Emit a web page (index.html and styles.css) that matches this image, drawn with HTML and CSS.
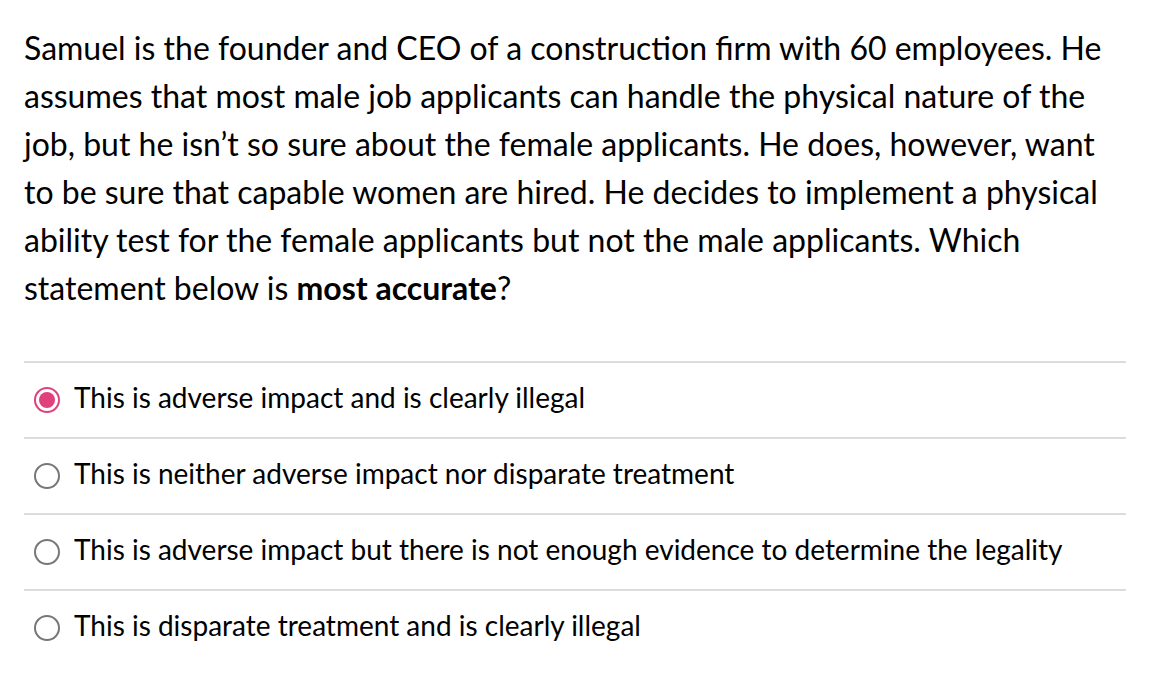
FILE: index.html
```html
<!DOCTYPE html>
<html lang="en">
<head>
<meta charset="utf-8">
<title>Question</title>
<link rel="stylesheet" href="styles.css">
</head>
<body>
<div class="question">
  <p class="prompt">Samuel is the founder and CEO of a construction firm with 60 employees. He assumes that most male job applicants can handle the physical nature of the job, but he isn’t so sure about the female applicants. He does, however, want to be sure that capable women are hired. He decides to implement a physical ability test for the female applicants but not the male applicants. Which statement below is <strong>most accurate</strong>?</p>
  <div class="answers">
    <label class="answer"><span class="radio checked"></span><span class="answer-text">This is adverse impact and is clearly illegal</span></label>
    <label class="answer"><span class="radio"></span><span class="answer-text">This is neither adverse impact nor disparate treatment</span></label>
    <label class="answer"><span class="radio"></span><span class="answer-text">This is adverse impact but there is not enough evidence to determine the legality</span></label>
    <label class="answer"><span class="radio"></span><span class="answer-text">This is disparate treatment and is clearly illegal</span></label>
  </div>
</div>
</body>
</html>
```

FILE: styles.css
```css
html, body {
  margin: 0;
  padding: 0;
  background: #ffffff;
}
body {
  font-family: Lato, "Open Sans", sans-serif;
  color: #000000;
}
.question {
  width: 1102px;
  padding: 24px 0 0 24px;
}
.prompt {
  margin: 0;
  font-size: 32px;
  line-height: 48px;
}
.prompt strong {
  font-weight: 700;
}
.answers {
  margin-top: 49px;
  display: flex;
  flex-direction: column;
}
.answer {
  display: flex;
  align-items: center;
  gap: 14px;
  height: 74px;
  border-top: 2px solid #dcdcdc;
  padding-left: 10px;
  font-size: 28px;
}
.answer-text {
  line-height: 34px;
  padding-bottom: 7px;
}
.radio {
  box-sizing: border-box;
  width: 26px;
  height: 26px;
  border-radius: 50%;
  border: 2px solid #777777;
  flex: none;
  position: relative;
}
.radio.checked {
  border: 2px solid #e0407c;
  background: #ffffff;
}
.radio.checked::after {
  content: "";
  position: absolute;
  left: 3px;
  top: 3px;
  width: 16px;
  height: 16px;
  border-radius: 50%;
  background: #e0407c;
}
```
